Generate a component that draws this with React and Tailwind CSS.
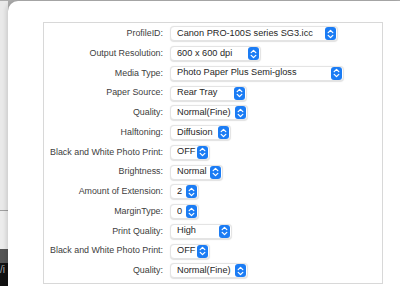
import React from 'react';

const rows = [
  { label: 'ProfileID:', value: 'Canon PRO-100S series SG3.icc', w: 168 },
  { label: 'Output Resolution:', value: '600 x 600 dpi', w: 91 },
  { label: 'Media Type:', value: 'Photo Paper Plus Semi-gloss', w: 174 },
  { label: 'Paper Source:', value: 'Rear Tray', w: 77 },
  { label: 'Quality:', value: 'Normal(Fine)', w: 78 },
  { label: 'Halftoning:', value: 'Diffusion', w: 61 },
  { label: 'Black and White Photo Print:', value: 'OFF', w: 40 },
  { label: 'Brightness:', value: 'Normal', w: 53 },
  { label: 'Amount of Extension:', value: '2', w: 29 },
  { label: 'MarginType:', value: '0', w: 29 },
  { label: 'Print Quality:', value: 'High', w: 62 },
  { label: 'Black and White Photo Print:', value: 'OFF', w: 40 },
  { label: 'Quality:', value: 'Normal(Fine)', w: 78 },
];

function Stepper() {
  return (
    <span className="w-[11px] h-[13px] shrink-0 rounded-[3px] bg-[#1b7cf4] grid place-items-center">
      <svg width="7" height="10" viewBox="0 0 7 10" fill="none" stroke="white" strokeWidth="1.3" strokeLinecap="round" strokeLinejoin="round">
        <path d="M1.2 3.6 L3.5 1.4 L5.8 3.6" />
        <path d="M1.2 6.4 L3.5 8.6 L5.8 6.4" />
      </svg>
    </span>
  );
}

function Popup({ value, w }) {
  return (
    <div style={{ width: w }}
      className="h-[15px] flex items-center pl-[6px] pr-[1px] bg-white rounded-[4px] border border-[#e4e4e4] shadow-[0_0.5px_1px_rgba(0,0,0,0.12)] text-[#262626] text-[9.2px]">
      <span className="flex-1 whitespace-nowrap overflow-hidden">{value}</span>
      <Stepper />
    </div>
  );
}

export default function App() {
  return (
    <div className="w-[400px] h-[286px] bg-[#adadad] pt-px flex overflow-hidden font-['Liberation_Sans',Arial,sans-serif] text-[8.9px]">
      <div className="w-[8px] flex flex-col bg-[#e9e9e9]">
        <div className="h-[209px]" />
        <div className="h-px bg-[#a0a0a0]" />
        <div className="h-[38px] bg-[#ececec]" />
        <div className="h-[14px] bg-[#555]" />
        <div className="flex-1 bg-[#111] text-[#aaa] text-[10px] leading-none pt-[2px]">/i</div>
      </div>
      <div className="flex-1 bg-white rounded-tl-[10px] shadow-[-2px_0_4px_rgba(0,0,0,0.12)] pt-[21px] pl-[35px]">
        <div className="w-[340px] h-[262px] border border-[#d8d8d8] pt-px">
          {rows.map((r, i) => (
            <div key={i} className="h-[19.75px] flex items-center">
              <div className="w-[120px] text-right pr-[1px] text-[#404040] whitespace-nowrap">{r.label}</div>
              <div className="ml-[6px]">
                <Popup value={r.value} w={r.w} />
              </div>
            </div>
          ))}
        </div>
      </div>
    </div>
  );
}
